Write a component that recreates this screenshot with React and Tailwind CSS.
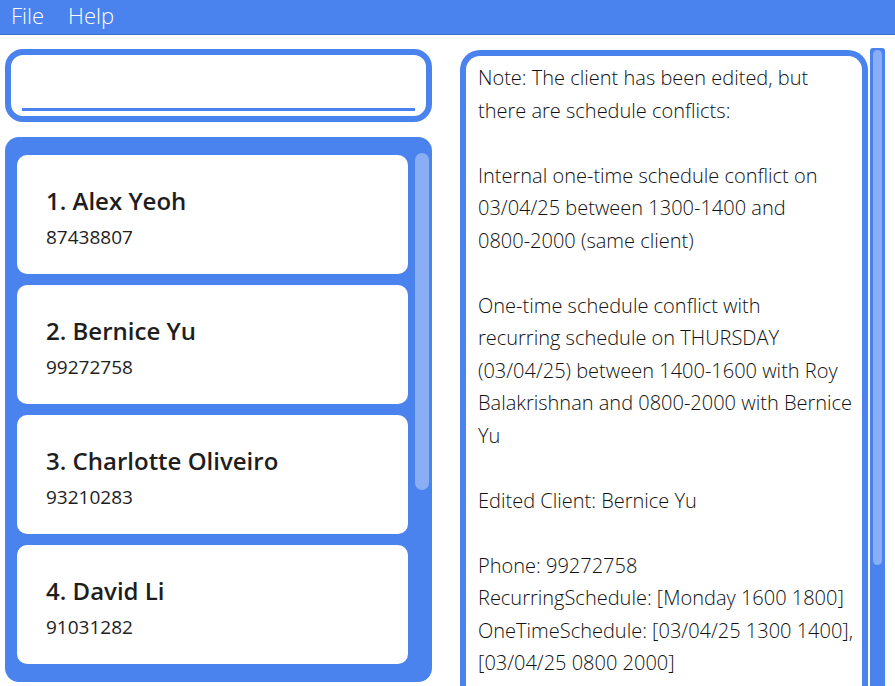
import React from 'react';

const clients = [
    { name: 'Alex Yeoh', phone: '87438807' },
    { name: 'Bernice Yu', phone: '99272758' },
    { name: 'Charlotte Oliveiro', phone: '93210283' },
    { name: 'David Li', phone: '91031282' },
];

const resultLines = [
    'Note: The client has been edited, but',
    'there are schedule conflicts:',
    '',
    'Internal one-time schedule conflict on',
    '03/04/25 between 1300-1400 and',
    '0800-2000 (same client)',
    '',
    'One-time schedule conflict with',
    'recurring schedule on THURSDAY',
    '(03/04/25) between 1400-1600 with Roy',
    'Balakrishnan and 0800-2000 with Bernice',
    'Yu',
    '',
    'Edited Client: Bernice Yu',
    '',
    'Phone: 99272758',
    'RecurringSchedule: [Monday 1600 1800]',
    'OneTimeSchedule: [03/04/25 1300 1400],',
    '[03/04/25 0800 2000]',
];

function ClientCard({ index, client }) {
    return (
        <div className="h-[119px] w-[391px] shrink-0 rounded-[10px] bg-white pl-[29px] pt-[30px]">
            <div className="text-[24px] font-semibold leading-[32px] text-[#1e1e1e]">
                {index}. {client.name}
            </div>
            <div className="mt-[8px] text-[19px] leading-[24px] text-[#1e1e1e]">{client.phone}</div>
        </div>
    );
}

export default function App() {
    return (
        <div className="flex h-[686px] w-[895px] flex-col overflow-hidden bg-white font-['Open_Sans',sans-serif]">
            {/* menu bar */}
            <div className="flex h-[35px] shrink-0 items-start gap-[24px] border-b border-[#3f6fcf] bg-[#4a82ee] pl-[11px] text-[22px] font-light leading-[30px] text-white">
                <span>File</span>
                <span>Help</span>
            </div>

            <div className="flex flex-1 overflow-hidden">
                {/* left column */}
                <div className="ml-[5px] flex w-[427px] flex-col pt-[14px]">
                    <div className="h-[73px] shrink-0 rounded-[18px] border-[6px] border-[#4a82ee] bg-white px-[11px] pt-[53px]">
                        <div className="h-[3px] bg-[#4a82ee]" />
                    </div>

                    <div className="mt-[15px] mb-[4px] flex flex-1 gap-[7px] overflow-hidden rounded-[14px] bg-[#4a82ee] pl-[12px] pt-[18px]">
                        <div className="flex flex-col gap-[11px]">
                            {clients.map((c, i) => (
                                <ClientCard key={c.name} index={i + 1} client={c} />
                            ))}
                        </div>
                        <div className="mt-[-2px] h-[337px] w-[14px] rounded-full bg-[#8aaef4]" />
                    </div>
                </div>

                {/* result display */}
                <div className="ml-[28px] mt-[15px] w-[408px] shrink-0 rounded-t-[20px] border-[6px] border-b-0 border-[#4a82ee] bg-white pl-[12px] pt-[6px]">
                    {resultLines.map((line, i) => (
                        <div key={i} className="h-[32.5px] whitespace-nowrap text-[20px] font-light leading-[32.5px] text-[#111]">
                            {line}
                        </div>
                    ))}
                </div>

                {/* right scrollbar */}
                <div className="ml-[2px] mt-[13px] h-[640px] w-[15px] rounded-t-[3px] bg-[#4a82ee] px-[3px] pt-[2px]">
                    <div className="h-[515px] rounded-full bg-[#8aaef4]" />
                </div>
            </div>
        </div>
    );
}
